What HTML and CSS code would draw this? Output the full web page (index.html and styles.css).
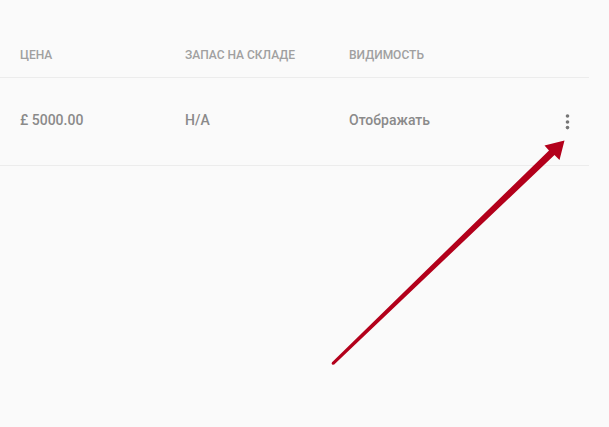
FILE: index.html
```html
<!DOCTYPE html>
<html lang="ru">
<head>
<meta charset="utf-8">
<link rel="stylesheet" href="styles.css">
</head>
<body>
<div class="table">
  <div class="row head">
    <div class="cell">ЦЕНА</div>
    <div class="cell">ЗАПАС НА СКЛАДЕ</div>
    <div class="cell">ВИДИМОСТЬ</div>
    <div class="cell"></div>
  </div>
  <div class="row body">
    <div class="cell">£ 5000.00</div>
    <div class="cell">H/A</div>
    <div class="cell">Отображать</div>
    <div class="cell menu">
      <svg width="5" height="16" viewBox="0 0 5 16"><circle cx="2.5" cy="2" r="1.8"/><circle cx="2.5" cy="8" r="1.8"/><circle cx="2.5" cy="13.6" r="1.8"/></svg>
    </div>
  </div>
</div>
<svg class="arrow" width="609" height="427" viewBox="0 0 609 427">
  <polygon points="331.8,362.4 549,150.5 544.5,145.5 564.5,140.5 559.5,160 554.5,155 334.2,364.4"/>
  <circle cx="333" cy="363.4" r="1.3"/>
</svg>
</body>
</html>
```

FILE: styles.css
```css
html, body {
  margin: 0;
  padding: 0;
  background: #fafafa;
  width: 609px;
  height: 427px;
  overflow: hidden;
  font-family: Roboto, "Liberation Sans", sans-serif;
}
.table {
  width: 589px;
}
.row {
  display: grid;
  grid-template-columns: 185px 164px 1fr 24px;
  border-bottom: 1px solid #ececec;
}
.row .cell:first-child {
  padding-left: 20px;
}
.head {
  height: 78px;
  box-sizing: border-box;
  align-items: end;
  padding-bottom: 14px;
  font-size: 12px;
  line-height: 16px;
  font-weight: 500;
  color: #a0a0a0;
}
.body {
  padding-top: 34px;
  height: 88px;
  box-sizing: border-box;
  align-items: start;
  font-size: 14px;
  line-height: 16px;
  font-weight: 500;
  color: #8a8a8a;
}
.menu {
  padding-top: 2px;
  display: flex;
  justify-content: flex-start;
  padding-left: 0;
}
.menu svg {
  fill: #757575;
  display: block;
}
.arrow {
  position: absolute;
  left: 0;
  top: 0;
  fill: #b3001b;
}
```
